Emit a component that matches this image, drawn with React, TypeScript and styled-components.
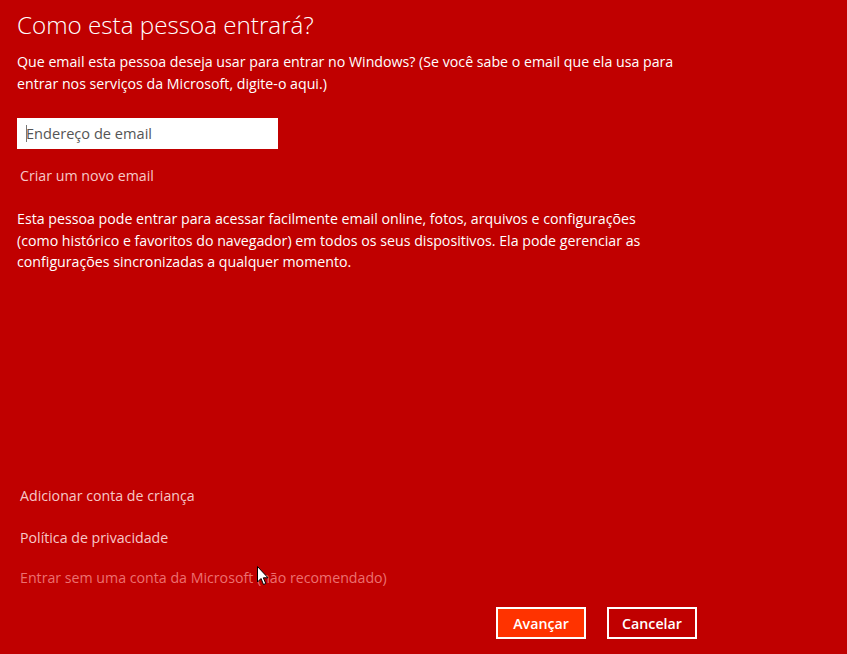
import React from 'react';
import styled, { createGlobalStyle } from 'styled-components';

const GlobalStyle = createGlobalStyle`
  html, body {
    margin: 0;
    padding: 0;
    background: #c00000;
  }
  * {
    box-sizing: border-box;
  }
`;

const Page = styled.div`
  position: relative;
  width: 847px;
  height: 654px;
  overflow: hidden;
  background: #c00000;
  color: #ffffff;
  font-family: 'Open Sans', 'Noto Sans', sans-serif;
  font-size: 14.2px;
  display: flex;
  flex-direction: column;
  padding: 7px 0 15px 17px;
`;

const Title = styled.h1`
  margin: 0;
  font-size: 24.2px;
  font-weight: 300;
  line-height: 36px;
`;

const Paragraph = styled.p<{ top: number }>`
  margin: ${(p) => p.top}px 0 0;
  width: 662px;
  line-height: 21.5px;
`;

const InputWrap = styled.div`
  position: relative;
  margin-top: 24px;
  width: 261px;
`;

const EmailInput = styled.input`
  display: block;
  width: 100%;
  height: 31px;
  border: none;
  outline: none;
  padding: 0 9px 1px;
  font-family: inherit;
  font-size: 14.6px;
  color: #000;
  background: #fff;
  &::placeholder {
    color: #555555;
  }
`;

const Caret = styled.span`
  position: absolute;
  left: 9px;
  top: 7px;
  width: 1px;
  height: 17px;
  background: #777;
`;

const LinkText = styled.a<{ dim?: boolean; top?: number }>`
  display: block;
  margin-top: ${(p) => p.top ?? 0}px;
  margin-left: 3px;
  line-height: 20px;
  color: ${(p) => (p.dim ? '#ec7070' : '#f6c8c8')};
  text-decoration: none;
  cursor: pointer;
`;

const Bottom = styled.div`
  margin-top: auto;
  display: flex;
  flex-direction: column;
`;

const Footer = styled.div`
  margin-top: 19px;
  display: flex;
  justify-content: flex-end;
  gap: 21px;
  padding-right: 150px;
`;

const Button = styled.button<{ primary?: boolean }>`
  width: 90px;
  height: 32px;
  border: 2px solid #fff;
  background: ${(p) => (p.primary ? '#ff3300' : '#c00000')};
  color: #fff;
  font-family: inherit;
  font-size: 14.2px;
  font-weight: 600;
  cursor: pointer;
`;

const Cursor = styled.svg`
  position: absolute;
  left: 257px;
  top: 566px;
  pointer-events: none;
`;

export default function App() {
  return (
    <Page>
      <GlobalStyle />
      <Title>Como esta pessoa entrará?</Title>
      <Paragraph top={8}>
        Que email esta pessoa deseja usar para entrar no Windows? (Se você sabe o email que ela usa para
        entrar nos serviços da Microsoft, digite-o aqui.)
      </Paragraph>
      <InputWrap>
        <EmailInput placeholder="Endereço de email" />
        <Caret />
      </InputWrap>
      <LinkText top={17}>Criar um novo email</LinkText>
      <Paragraph top={22}>
        Esta pessoa pode entrar para acessar facilmente email online, fotos, arquivos e configurações
        (como histórico e favoritos do navegador) em todos os seus dispositivos. Ela pode gerenciar as
        configurações sincronizadas a qualquer momento.
      </Paragraph>
      <Bottom>
        <LinkText>Adicionar conta de criança</LinkText>
        <LinkText top={22}>Política de privacidade</LinkText>
        <LinkText top={20} dim>
          Entrar sem uma conta da Microsoft (não recomendado)
        </LinkText>
      </Bottom>
      <Footer>
        <Button primary>Avançar</Button>
        <Button>Cancelar</Button>
      </Footer>
      <Cursor width="13" height="20" viewBox="0 0 13 20">
        <path d="M0.5 0.5 L0.5 16 L4 12.5 L6.5 18.5 L8.8 17.5 L6.3 11.8 L11 11.8 Z" fill="#fff" stroke="#000" strokeWidth="1" />
      </Cursor>
    </Page>
  );
}
